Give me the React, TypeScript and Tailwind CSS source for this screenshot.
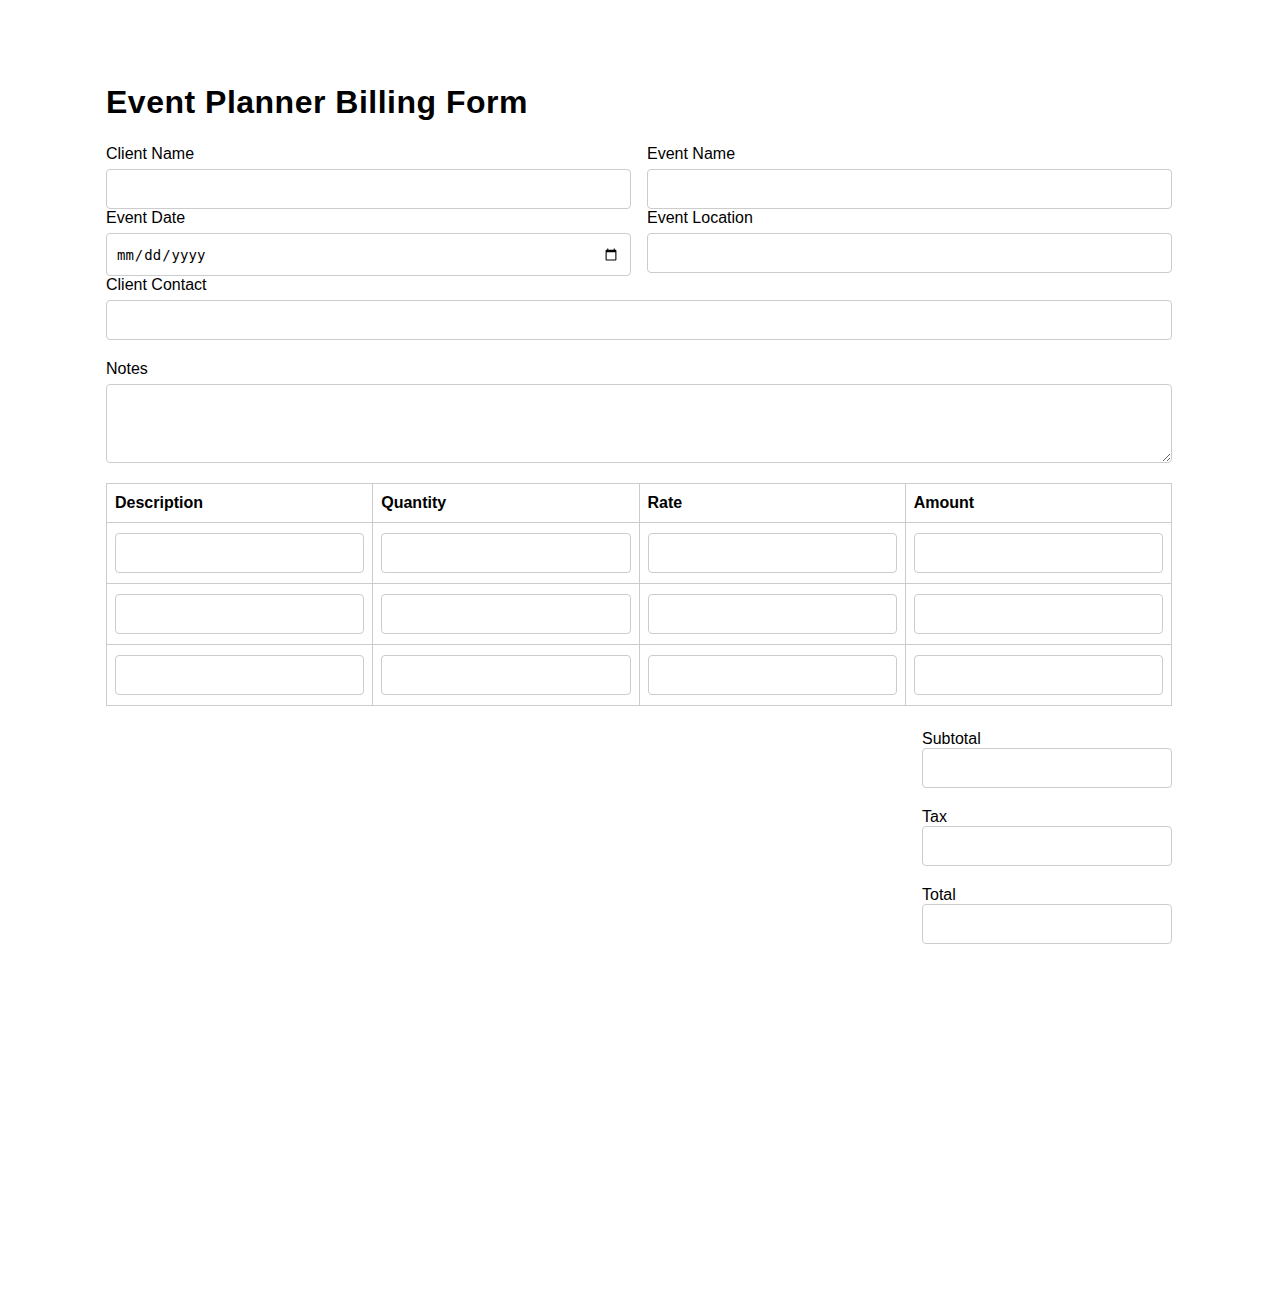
import React from "react";

const inputCls =
    "block w-full h-[40px] border border-[#ccc] rounded-[4px] px-[10px] bg-white outline-none";

const Field = ({ label, type = "text" }: { label: string; type?: string }) => {
    return (
        <div>
            <label className="block mb-[6px] leading-[18px]">{label}</label>
            {type === "date" ? (
                <input
                    type="date"
                    className="block w-full h-[43px] border border-[#ccc] rounded-[4px] pl-[9px] pr-[10px] pt-[1px] bg-white font-['DejaVu_Sans_Mono',monospace] text-[14px]"
                />
            ) : (
                <input type={type} className={inputCls} />
            )}
        </div>
    );
};

const App = () => {
    const rows = [0, 1, 2];
    const cols = ["Description", "Quantity", "Rate", "Amount"];
    return (
        <div className="w-full min-h-[1300px] bg-white text-black font-['Liberation_Sans',Arial,sans-serif] text-[16px]">
            <div className="w-[1066px] mx-auto pt-[84px]">
                <h1 className="text-[32px] font-bold leading-[37px] tracking-[0.5px] mb-[24px]">
                    Event Planner Billing Form
                </h1>

                <div className="grid grid-cols-2 gap-x-[16px]">
                    <Field label="Client Name" />
                    <Field label="Event Name" />
                    <Field label="Event Date" type="date" />
                    <Field label="Event Location" />
                </div>
                <Field label="Client Contact" />

                <div className="mt-[20px]">
                    <label className="block mb-[6px] leading-[18px]">Notes</label>
                    <textarea className="block w-full h-[79px] border border-[#ccc] rounded-[4px] p-[10px] resize-y" />
                </div>

                <table className="w-full mt-[20px] border-collapse table-fixed">
                    <thead>
                        <tr>
                            {cols.map((c) => (
                                <th
                                    key={c}
                                    className="border border-[#ccc] px-[8px] py-[10px] text-left font-bold leading-[18.4px]"
                                >
                                    {c}
                                </th>
                            ))}
                        </tr>
                    </thead>
                    <tbody>
                        {rows.map((r) => (
                            <tr key={r}>
                                {cols.map((c) => (
                                    <td key={c} className="border border-[#ccc] px-[8px] py-[10px]">
                                        <input type="text" className={inputCls} />
                                    </td>
                                ))}
                            </tr>
                        ))}
                    </tbody>
                </table>

                <div className="flex justify-end mt-[23px]">
                    <div className="w-[250px] flex flex-col gap-[19px]">
                        <div>
                            <label className="block leading-[19px]">Subtotal</label>
                            <input type="text" className={inputCls} />
                        </div>
                        <div>
                            <label className="block leading-[19px]">Tax</label>
                            <input type="text" className={inputCls} />
                        </div>
                        <div>
                            <label className="block leading-[19px]">Total</label>
                            <input type="text" className={inputCls} />
                        </div>
                    </div>
                </div>
            </div>
        </div>
    );
};

export default App;
